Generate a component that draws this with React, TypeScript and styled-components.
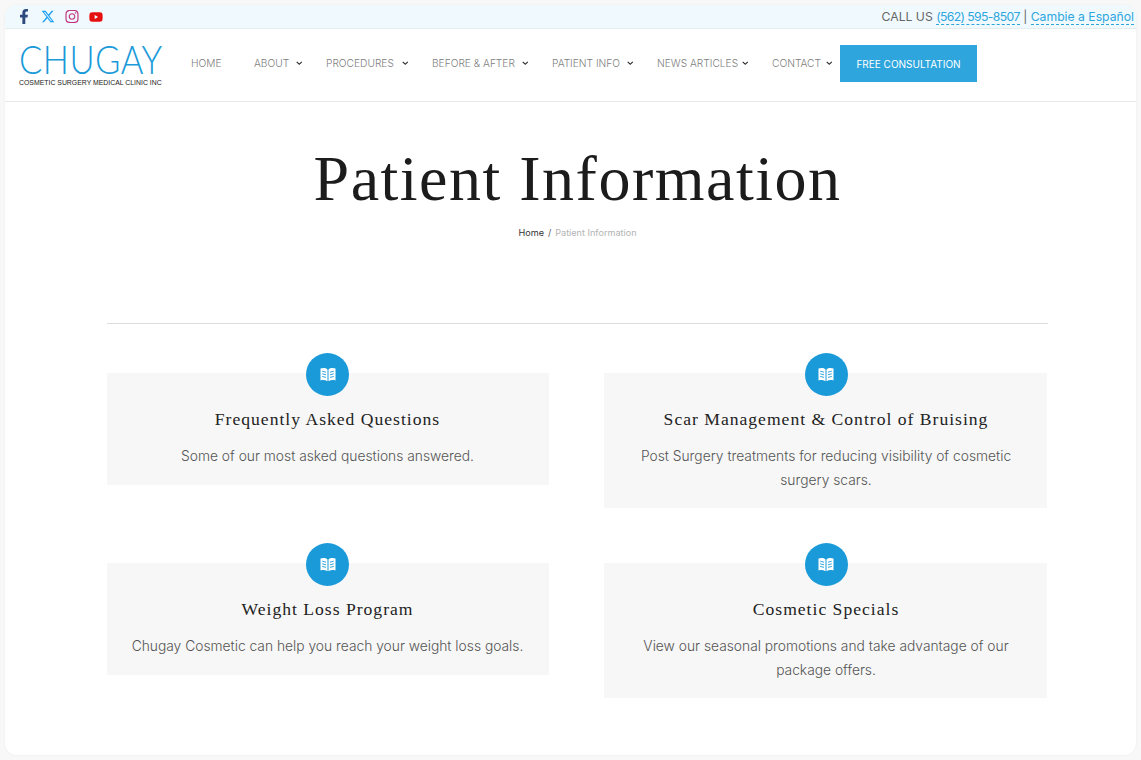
import * as React from 'react';
import styled, { createGlobalStyle } from 'styled-components';
import { FaFacebookF, FaInstagram, FaYoutube, FaChevronDown } from 'react-icons/fa';
import { FaXTwitter } from 'react-icons/fa6';

const GlobalStyle = createGlobalStyle`
    html, body {
        margin: 0;
        padding: 0;
        background: #f8f8f8;
    }
    body {
        font-family: "Inter", "Liberation Sans", sans-serif;
    }
`;

const Page = styled.div`
    height: 760px;
    padding: 5px;
    box-sizing: border-box;
`;

const Frame = styled.div`
    height: 750px;
    background: #ffffff;
    border-radius: 12px;
    overflow: hidden;
    box-shadow: 0 0 3px rgba(0, 0, 0, 0.05);
`;

const TopBar = styled.div`
    height: 24px;
    box-sizing: border-box;
    background: #f0f9fe;
    border-bottom: 1px solid #e3eef1;
    display: flex;
    align-items: center;
    justify-content: space-between;
    padding: 0 2px 0 12px;
`;

const Socials = styled.div`
    display: flex;
    align-items: center;
    gap: 10px;
`;

const Social = styled.a<{ $color: string }>`
    display: flex;
    width: 14px;
    justify-content: center;
    color: ${p => p.$color};
    font-size: 15px;
`;

const CallText = styled.div`
    font-size: 12.2px;
    color: #666666;
    white-space: nowrap;
`;

const CallLink = styled.a`
    color: #2da6dd;
    border-bottom: 1px dashed #2da6dd;
`;

const PhoneLink = styled(CallLink)`
    letter-spacing: -0.6px;
`;

const Header = styled.header`
    height: 73px;
    box-sizing: border-box;
    border-bottom: 1px solid #e8e8e8;
    display: flex;
    align-items: center;
    padding: 0 0 3px 14px;
`;

const Logo = styled.div`
    width: 143px;
    margin-right: 29px;
    margin-top: 3px;
`;

const LogoName = styled.div`
    font-family: "Lato", sans-serif;
    font-weight: 300;
    font-size: 40px;
    line-height: 32px;
    letter-spacing: 0.5px;
    color: #1a9ad9;
    white-space: nowrap;
    transform: scaleX(0.865);
    transform-origin: left center;
`;

const LogoTag = styled.div`
    font-family: "Liberation Sans", sans-serif;
    font-size: 6.9px;
    line-height: 9px;
    margin-top: 3px;
    color: #222222;
    white-space: nowrap;
`;

const Nav = styled.nav`
    display: flex;
    align-items: center;
`;

const NavItem = styled.a<{ $width: number }>`
    display: flex;
    align-items: center;
    width: ${p => p.$width}px;
    padding-bottom: 1px;
    font-size: 10.2px;
    font-weight: 300;
    color: #808080;
    white-space: nowrap;
`;

const NavArrow = styled(FaChevronDown)<{ $tail: number }>`
    flex-shrink: 0;
    font-size: 6.5px;
    color: #222222;
    margin-left: auto;
    margin-right: ${p => p.$tail}px;
`;

const ConsultButton = styled.a`
    width: 137px;
    height: 37px;
    background: #2ea6dd;
    color: #ffffff;
    font-size: 10px;
    display: flex;
    align-items: center;
    justify-content: center;
    white-space: nowrap;
`;

const Content = styled.main`
    padding: 0 88px 0 102px;
`;

const Hero = styled.section`
    height: 222px;
    box-sizing: border-box;
    border-bottom: 1px solid #dddddd;
    text-align: center;
    padding-top: 45px;
`;

const Title = styled.h1`
    margin: 0;
    font-family: "Liberation Serif", serif;
    font-weight: 400;
    font-size: 64px;
    line-height: 64px;
    letter-spacing: 1.5px;
    color: #1c1c1c;
`;

const Crumbs = styled.div`
    margin-top: 16px;
    font-size: 9.1px;
    color: #b3b3b3;
`;

const CrumbHome = styled.span`
    color: #333333;
`;

const CrumbSep = styled.span`
    color: #555555;
    margin: 0 4px;
`;

const Grid = styled.div`
    display: grid;
    grid-template-columns: 442px 443px;
    column-gap: 55px;
    row-gap: 55px;
    align-items: start;
    padding-top: 49px;
`;

// the left column sits half a pixel left of its box in the picture, the right one half a pixel right
const Card = styled.article<{ $left: boolean }>`
    position: relative;
    background: #f7f7f7;
    padding: 35px ${p => (p.$left ? 21 : 20)}px 16px ${p => (p.$left ? 20 : 21)}px;
    text-align: center;
`;

const Badge = styled.div<{ $left: boolean }>`
    position: absolute;
    top: -20px;
    left: 50%;
    margin-left: ${p => (p.$left ? -22 : -21)}px;
    width: 43px;
    height: 43px;
    border-radius: 50%;
    background: #1a9ad9;
    display: flex;
    align-items: center;
    justify-content: center;
`;

const CardTitle = styled.h3`
    margin: 0 0 15px;
    font-family: "Liberation Serif", serif;
    font-weight: 400;
    font-size: 17.6px;
    line-height: 22px;
    letter-spacing: 1px;
    color: #222222;
`;

const CardText = styled.p`
    margin: 0;
    font-size: 13.8px;
    font-weight: 300;
    line-height: 23.5px;
    color: #555555;
`;

const BookIcon = () => (
    <svg width="16" height="15" viewBox="0 0 16 15" fill="none">
        <path d="M0.5 1.5C3 0.6 5.8 0.8 7.5 2.4V14.2C5.6 13 3 12.8 0.5 13.4Z" fill="#fff" />
        <path d="M15.5 1.5C13 0.6 10.2 0.8 8.5 2.4V14.2C10.4 13 13 12.8 15.5 13.4Z" fill="#fff" />
        <path d="M2.2 4.2L6 5.2M2.2 6.8L6 7.8M2.2 9.4L6 10.4M13.8 4.2L10 5.2M13.8 6.8L10 7.8M13.8 9.4L10 10.4" stroke="#1a9ad9" strokeWidth="0.9" />
    </svg>
);

const navItems = [
    { label: 'HOME', width: 63 },
    { label: 'ABOUT', width: 72, tail: 24 },
    { label: 'PROCEDURES', width: 106, tail: 24 },
    { label: 'BEFORE & AFTER', width: 120, tail: 24 },
    { label: 'PATIENT INFO', width: 105, tail: 24 },
    { label: 'NEWS ARTICLES', width: 115, tail: 24 },
    { label: 'CONTACT', width: 68, tail: 8 },
];

const cards = [
    { title: 'Frequently Asked Questions', text: 'Some of our most asked questions answered.' },
    { title: 'Scar Management & Control of Bruising', text: 'Post Surgery treatments for reducing visibility of cosmetic surgery scars.' },
    { title: 'Weight Loss Program', text: 'Chugay Cosmetic can help you reach your weight loss goals.' },
    { title: 'Cosmetic Specials', text: 'View our seasonal promotions and take advantage of our package offers.' },
];

export default function App() {
    return (
        <Page>
            <GlobalStyle />
            <Frame>
                <TopBar>
                    <Socials>
                        <Social $color="#2d4a7c"><FaFacebookF /></Social>
                        <Social $color="#1da1f2"><FaXTwitter /></Social>
                        <Social $color="#c13584"><FaInstagram /></Social>
                        <Social $color="#e60f0f"><FaYoutube size={16} /></Social>
                    </Socials>
                    <CallText>
                        CALL US <PhoneLink>(562) 595-8507</PhoneLink> | <CallLink>Cambie a Español</CallLink>
                    </CallText>
                </TopBar>
                <Header>
                    <Logo>
                        <LogoName>CHUGAY</LogoName>
                        <LogoTag>COSMETIC SURGERY MEDICAL CLINIC INC</LogoTag>
                    </Logo>
                    <Nav>
                        {navItems.map(item => (
                            <NavItem key={item.label} $width={item.width}>
                                {item.label}
                                {item.tail !== undefined && <NavArrow $tail={item.tail} />}
                            </NavItem>
                        ))}
                        <ConsultButton>FREE CONSULTATION</ConsultButton>
                    </Nav>
                </Header>
                <Content>
                    <Hero>
                        <Title>Patient Information</Title>
                        <Crumbs>
                            <CrumbHome>Home</CrumbHome>
                            <CrumbSep>/</CrumbSep>
                            Patient Information
                        </Crumbs>
                    </Hero>
                    <Grid>
                        {cards.map((card, i) => (
                            <Card key={card.title} $left={i % 2 === 0}>
                                <Badge $left={i % 2 === 0}><BookIcon /></Badge>
                                <CardTitle>{card.title}</CardTitle>
                                <CardText>{card.text}</CardText>
                            </Card>
                        ))}
                    </Grid>
                </Content>
            </Frame>
        </Page>
    );
}
